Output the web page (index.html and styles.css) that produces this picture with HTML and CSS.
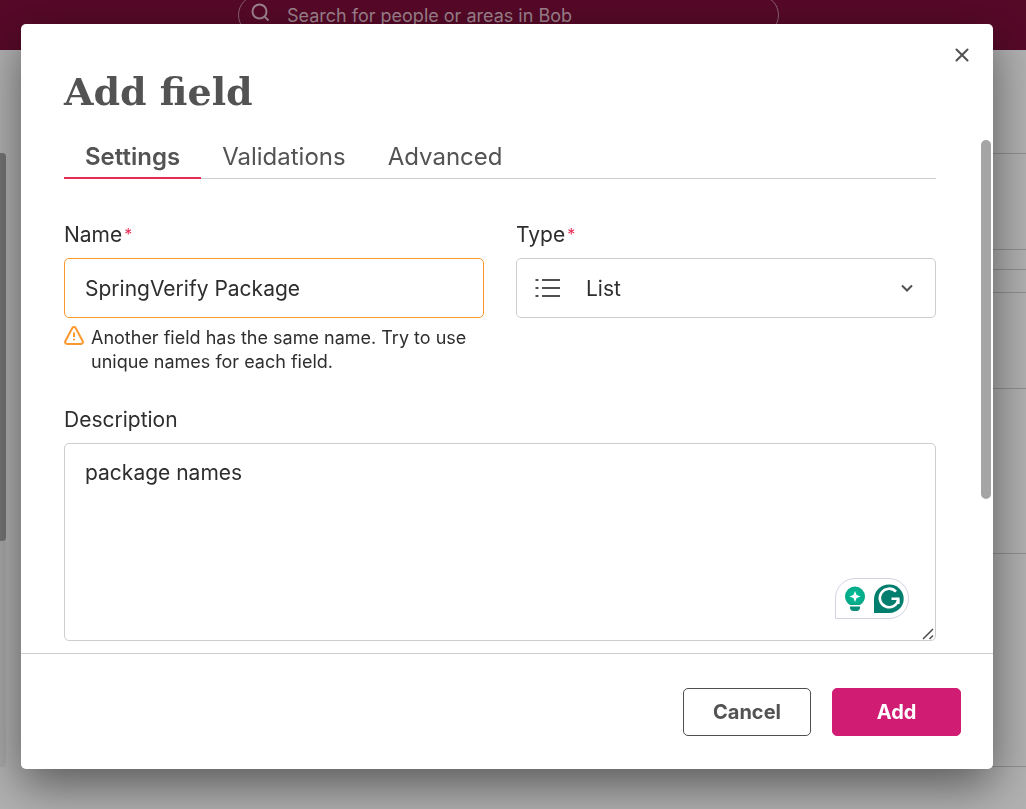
FILE: index.html
```html
<!DOCTYPE html>
<html lang="en">
<head>
<meta charset="utf-8">
<title>Add field</title>
<link rel="stylesheet" href="styles.css">
</head>
<body>
<div class="page">
  <header class="topbar">
    <label class="search">
      <svg class="search-icon" viewBox="0 0 20 20" aria-hidden="true"><circle cx="8.500" cy="8.500" r="7"/><path d="M13.500 13.500 17.500 17.500"/></svg>
      <input class="search-input" type="search" placeholder="Search for people or areas in Bob" aria-label="Search">
    </label>
  </header>
  <div class="content">
    <div class="rail"><div class="rail-thumb"></div></div>
    <div class="rows">
      <div class="row row-heading"></div>
      <div class="row row-tall"></div>
      <div class="row row-thin"></div>
      <div class="row row-slim"></div>
      <div class="row row-tall"></div>
      <div class="row row-group"></div>
      <div class="row row-last"></div>
    </div>
  </div>
</div>

<div class="overlay">
  <div class="modal" role="dialog" aria-modal="true" aria-labelledby="dialog-title">
    <button class="close" type="button" aria-label="Close">
      <svg viewBox="0 0 14 14" aria-hidden="true"><path d="M1.500 1.500 12.500 12.500M12.500 1.500 1.500 12.500"/></svg>
    </button>
    <div class="modal-head">
      <h1 class="title" id="dialog-title">Add field</h1>
      <div class="tabs" role="tablist">
        <button class="tab tab-active" type="button" role="tab" aria-selected="true">Settings</button>
        <button class="tab" type="button" role="tab" aria-selected="false">Validations</button>
        <button class="tab" type="button" role="tab" aria-selected="false">Advanced</button>
      </div>
    </div>
    <form class="fields" id="field-form">
      <div class="columns">
        <div class="field">
          <label class="label" for="name">Name<span class="required">*</span></label>
          <input class="control control-warning" id="name" type="text" value="SpringVerify Package" aria-describedby="name-note">
          <div class="note">
            <svg class="note-icon" viewBox="0 0 20 20" aria-hidden="true"><path d="M8.300 2a2 2 0 0 1 3.400 0l7 13.200a1.900 1.900 0 0 1-1.700 2.800H3a1.900 1.900 0 0 1-1.700-2.800z"/><path d="M10 6.500v4.500M10 12.700v1.600"/></svg>
            <p class="note-text" id="name-note">Another field has the same name. Try to use unique names for each field.</p>
          </div>
        </div>
        <div class="field">
          <label class="label" for="type">Type<span class="required">*</span></label>
          <div class="picker">
            <svg class="picker-icon" viewBox="0 0 26 20" aria-hidden="true"><path d="M.5 1h3M7 1h18M.5 9h3M7 9h18M.5 17h3M7 17h18"/></svg>
            <select class="control picker-select" id="type"><option>List</option></select>
            <svg class="picker-arrow" viewBox="0 0 12 8" aria-hidden="true"><path d="M1 1.500 6 6.500 11 1.500"/></svg>
          </div>
        </div>
      </div>
      <div class="field">
        <label class="label" for="description">Description</label>
        <div class="area">
          <textarea class="control textarea" id="description" spellcheck="false">package names</textarea>
          <svg class="grip" viewBox="0 0 12 12" aria-hidden="true"><path d="M1 11 11 1M7.500 11 11 7.500"/></svg>
          <div class="assistant">
            <svg class="bulb" viewBox="0 0 22 26" aria-hidden="true">
              <defs><radialGradient id="bulb-fill"><stop offset="0" stop-color="#00c29a"/><stop offset="1" stop-color="#06a887"/></radialGradient></defs>
              <path fill="url(#bulb-fill)" d="M11 .5A10 10 0 0 0 1 10.500c0 4 2.300 6.500 5 8.500h10c2.700-2 5-4.500 5-8.500A10 10 0 0 0 11 .5z"/>
              <path fill="#fff" d="M11 5 12.600 8.900 16.500 10.500 12.600 12.100 11 16 9.400 12.100 5.500 10.500 9.400 8.900z"/>
              <path fill="#078f78" d="M6 20.500h10v1.500a3.500 3.500 0 0 1-3.500 3h-3a3.500 3.500 0 0 1-3.500-3z"/>
            </svg>
            <svg class="g-badge" viewBox="0 0 30 30" aria-hidden="true">
              <path fill="#027e6f" d="M15.500 .5a14.200 14.200 0 1 1 0 28.400H0V15A15 15 0 0 1 15.500 .5z"/>
              <path fill="none" stroke="#fff" stroke-width="2.600" d="M22 7.700A9.300 9.300 0 1 0 24.300 15.500"/>
              <path fill="none" stroke="#fff" stroke-width="2.600" d="M17.500 14.800h8M24.300 15v5"/>
            </svg>
          </div>
        </div>
      </div>
    </form>
    <div class="scroll-thumb"></div>
    <footer class="actions">
      <button class="button button-outline" type="button">Cancel</button>
      <button class="button button-primary" type="submit" form="field-form">Add</button>
    </footer>
  </div>
</div>
</body>
</html>
```
FILE: styles.css
```css
* {
  box-sizing: border-box;
}

body {
  margin: 0;
  height: 100vh;
  overflow: hidden;
  background: #b2b2b2;
  color: #2e2e2e;
  font-family: Inter, "Liberation Sans", sans-serif;
  font-size: 21px;
}

button,
input,
select,
textarea {
  font: inherit;
  color: inherit;
}

/* Dimmed page behind the dialog */

.page {
  display: flex;
  flex-direction: column;
  height: 100vh;
}

.topbar {
  display: flex;
  justify-content: center;
  align-items: flex-start;
  flex: none;
  height: 55px;
  margin-top: -5px;
  padding-right: 9px;
  background: #570928;
}

.search {
  display: flex;
  align-items: center;
  gap: 16px;
  width: 541px;
  height: 40px;
  padding: 0 12px;
  border: 1px solid #8c6273;
  border-radius: 20px;
}

.search-icon {
  width: 20px;
  height: 20px;
  margin-bottom: 4px;
  fill: none;
  stroke: #9f8490;
  stroke-width: 2;
}

.search-input {
  flex: 1;
  min-width: 0;
  padding: 0;
  border: 0;
  outline: 0;
  background: none;
  font-size: 18px;
}

.search-input::placeholder {
  color: #9f8490;
  opacity: 1;
}

.content {
  display: flex;
  flex: 1;
  gap: 40px;
}

.rail {
  width: 6px;
  margin: 103px 0 42px;
  border-radius: 0 4px 4px 0;
  background: #a9a9a9;
}

.rail-thumb {
  height: 388px;
  border-radius: 0 4px 4px 0;
  background: #747474;
}

.rows {
  flex: 1;
}

.row {
  border-bottom: 1px solid #919191;
}

.row-heading { height: 104px; }
.row-tall { height: 96px; }
.row-thin { height: 20px; }
.row-slim { height: 23px; }
.row-group { height: 165px; }
.row-last { height: 213px; }

/* Dialog */

.overlay {
  position: fixed;
  inset: 0;
  padding: 24px 33px 40px 21px;
}

.modal {
  position: relative;
  display: flex;
  flex-direction: column;
  height: 100%;
  border-radius: 5px;
  background: #fff;
  box-shadow: 0 16px 48px rgba(0, 0, 0, 0.5);
}

.close {
  position: absolute;
  top: 20px;
  right: 20px;
  display: flex;
  padding: 4px;
  border: 0;
  background: none;
}

.close svg {
  width: 14px;
  height: 14px;
  fill: none;
  stroke: #505050;
  stroke-width: 2;
  stroke-linecap: round;
}

.modal-head {
  padding: 40px 57px 0 43px;
}

.title {
  margin: 0 0 16px;
  color: #535353;
  font-family: "DejaVu Serif", serif;
  font-size: 38px;
  font-weight: 700;
  line-height: 56px;
}

.tabs {
  display: flex;
  border-bottom: 1px solid #cdcdcd;
}

.tab {
  margin-bottom: -1px;
  padding: 1px 21px 0;
  border: 0;
  border-bottom: 2px solid transparent;
  background: none;
  color: #535353;
  font-size: 24px;
  line-height: 40px;
}

.tab-active {
  border-bottom-color: #e72c54;
  font-weight: 600;
}

.fields {
  display: flex;
  flex: 1;
  flex-direction: column;
  gap: 32px;
  min-height: 0;
  padding: 42px 57px 12px 43px;
}

.columns {
  display: grid;
  grid-template-columns: 1fr 1fr;
  gap: 32px;
}

.field {
  display: flex;
  flex-direction: column;
}

.label {
  margin-bottom: 9px;
  line-height: 28px;
}

.required {
  margin-left: 2px;
  color: #e72c54;
  font-size: 16px;
  line-height: 16px;
  vertical-align: 2px;
}

.control {
  display: block;
  width: 100%;
  height: 60px;
  padding: 0 20px;
  border: 1px solid #cdcdcd;
  border-radius: 5px;
  outline: 0;
  background: #fff;
}

.control-warning {
  border-color: #fd9831;
}

.note {
  display: flex;
  gap: 7px;
  padding-top: 8px;
}

.note-icon {
  flex: none;
  width: 20px;
  height: 20px;
  fill: none;
  stroke: #fd9831;
  stroke-width: 2;
}

.note-text {
  margin: 0;
  font-size: 18px;
  line-height: 24px;
}

.picker {
  position: relative;
}

.picker-select {
  padding-left: 69px;
  appearance: none;
}

.picker-icon,
.picker-arrow {
  position: absolute;
  fill: none;
  stroke: #505050;
  stroke-width: 2;
  pointer-events: none;
}

.picker-icon {
  top: 21px;
  left: 19px;
  width: 26px;
  height: 20px;
}

.picker-arrow {
  top: 26px;
  right: 23px;
  width: 12px;
  height: 8px;
}

.area {
  position: relative;
}

.textarea {
  height: 198px;
  padding: 14px 20px;
  line-height: 30px;
  resize: none;
}

.grip {
  position: absolute;
  right: 2px;
  bottom: 1px;
  width: 12px;
  height: 12px;
  fill: none;
  stroke: #4a4a4a;
  stroke-width: 1.5;
}

.assistant {
  position: absolute;
  right: 27px;
  bottom: 22px;
  display: flex;
  align-items: center;
  gap: 8px;
  height: 41px;
  padding: 0 4px 0 8px;
  border: 1px solid #d0d4e0;
  border-radius: 20px 20px 20px 0;
  background: #fff;
}

.bulb {
  width: 22px;
  height: 26px;
}

.g-badge {
  width: 30px;
  height: 30px;
}

.scroll-thumb {
  position: absolute;
  top: 116px;
  right: 2px;
  width: 10px;
  height: 359px;
  border-radius: 5px;
  background: #a5a5a5;
}

.actions {
  display: flex;
  justify-content: flex-end;
  gap: 21px;
  padding: 34px 32px 33px;
  border-top: 1px solid #cdcdcd;
}

.button {
  min-width: 128px;
  height: 48px;
  border: 1px solid #505050;
  border-radius: 5px;
  background: #fff;
  color: #535353;
  font-size: 20px;
  font-weight: 700;
}

.button-primary {
  min-width: 129px;
  border-color: #d01c73;
  background: #d01c73;
  color: #fff;
}
```
